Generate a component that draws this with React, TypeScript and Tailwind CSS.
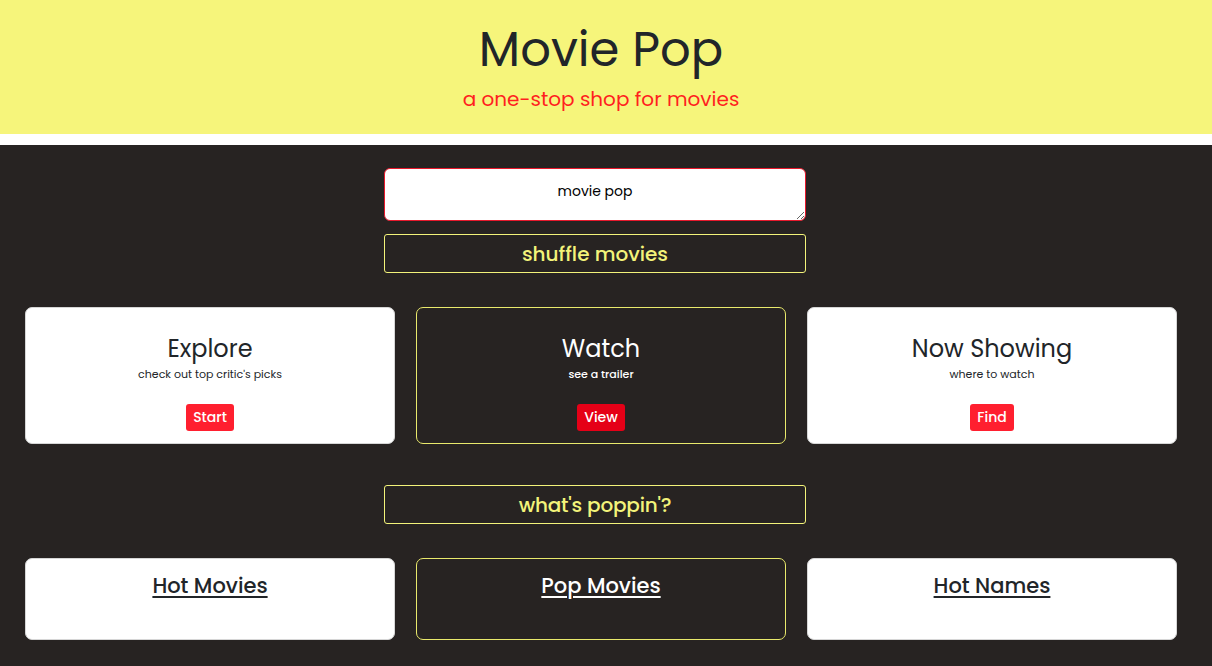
export default function App() {
  const actions = [
    { title: 'Explore', sub: "check out top critic's picks", btn: 'Start', dark: false },
    { title: 'Watch', sub: 'see a trailer', btn: 'View', dark: true },
    { title: 'Now Showing', sub: 'where to watch', btn: 'Find', dark: false },
  ];
  const lists = [
    { title: 'Hot Movies', dark: false },
    { title: 'Pop Movies', dark: true },
    { title: 'Hot Names', dark: false },
  ];

  return (
    <div className="min-h-screen bg-white font-['Poppins','Inter',sans-serif] text-[#212529]">
      <header className="h-[134px] bg-[#f6f57b] flex flex-col items-center pt-[19px] pr-[10px]">
        <h1 className="text-[48px] leading-[62px] font-normal">Movie Pop</h1>
        <p className="text-[20px] leading-[30px] text-[#ff1f1f] mt-[3px]">a one-stop shop for movies</p>
      </header>
      <div className="h-[11px] bg-white" />
      <main className="bg-[#272322] min-h-[521px] pt-[23px] pb-[26px]">
        <div className="w-[422px] ml-[384px] flex flex-col gap-[13px]">
          <textarea
            defaultValue="movie pop"
            className="h-[53px] w-full bg-white rounded-[6px] border border-[#e8192c] text-center text-[14px] text-black pt-[12px] outline-none"
          />
          <button className="h-[39px] w-full rounded-[3px] border border-[#f3f37a] text-[#f3f37a] text-[20px] font-medium">
            shuffle movies
          </button>
        </div>

        <div className="mt-[34px] ml-[25px] flex gap-[21px]">
          {actions.map((a) => (
            <div
              key={a.title}
              className={
                'w-[370px] h-[137px] rounded-[7px] border flex flex-col items-center pt-[25px] ' +
                (a.dark ? 'bg-[#272322] border-[#e9e96c] text-white' : 'bg-white border-[#d6d6d6] text-[#212529]')
              }
            >
              <h3 className="text-[24px] leading-[32px]">{a.title}</h3>
              <p className={'text-[11px] leading-[16px] mt-[1px] ' + (a.dark ? 'font-medium' : '')}>{a.sub}</p>
              <button
                className={
                  'mt-[22px] h-[27px] px-[7px] rounded-[3px] text-white text-[14px] font-medium ' +
                  (a.dark ? 'bg-[#e50017]' : 'bg-[#ff1f2f]')
                }
              >
                {a.btn}
              </button>
            </div>
          ))}
        </div>

        <div className="w-[422px] ml-[384px] mt-[41px]">
          <button className="h-[39px] w-full rounded-[3px] border border-[#f3f37a] text-[#f3f37a] text-[20px] font-medium tracking-[-0.2px]">
            what's poppin'?
          </button>
        </div>

        <div className="mt-[34px] ml-[25px] flex gap-[21px]">
          {lists.map((l) => (
            <div
              key={l.title}
              className={
                'w-[370px] h-[82px] rounded-[7px] border flex flex-col items-center pt-[13px] ' +
                (l.dark ? 'bg-[#272322] border-[#e9e96c] text-white' : 'bg-white border-[#d6d6d6] text-[#212529]')
              }
            >
              <a href="#" className="text-[21px] leading-[28px] font-medium underline underline-offset-[3px]">
                {l.title}
              </a>
            </div>
          ))}
        </div>
      </main>
    </div>
  );
}
